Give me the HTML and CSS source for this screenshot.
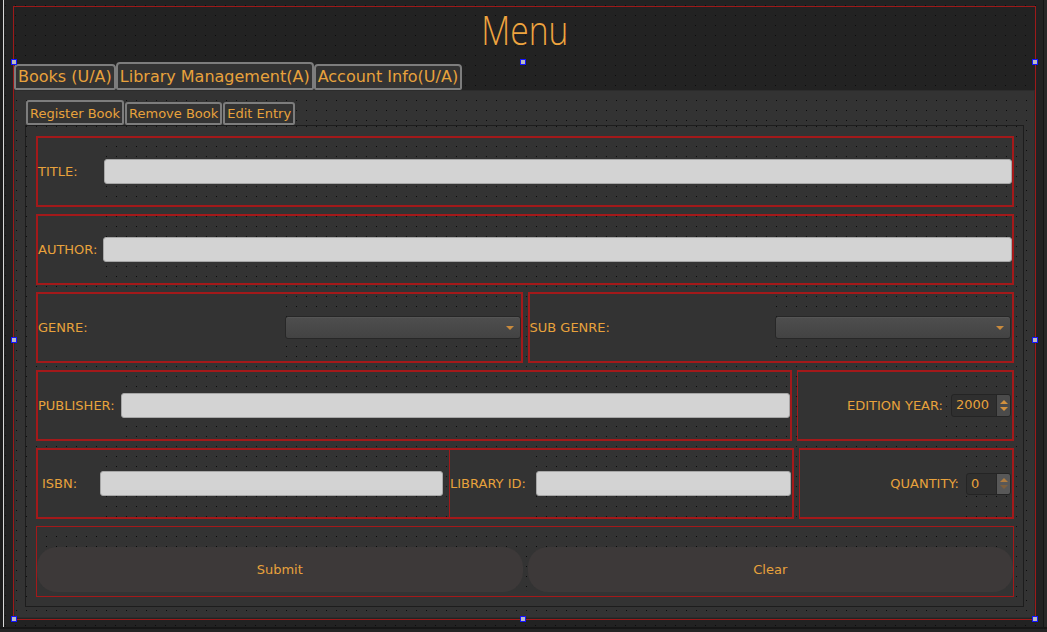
FILE: index.html
```html
<!DOCTYPE html>
<html>
<head>
<meta charset="utf-8">
<title>Menu</title>
<link rel="stylesheet" href="styles.css">
</head>
<body>
<div class="screen">
  <div class="main">
    <div class="gutter"></div>
    <div class="wline"></div>
    <div class="canvas">
      <div class="form">
        <div class="title-area"><span class="title">Menu</span></div>
        <div class="tabwidget">
          <div class="tabbar">
            <div class="tab">Books (U/A)</div>
            <div class="tab active">Library Management(A)</div>
            <div class="tab">Account Info(U/A)</div>
          </div>
          <div class="pane">
            <div class="subtabbar">
              <div class="stab active">Register Book</div>
              <div class="stab">Remove Book</div>
              <div class="stab">Edit Entry</div>
            </div>
            <div class="subpane">
              <div class="row">
                <div class="box grow">
                  <div class="lbl w-title">TITLE:</div>
                  <div class="field grow"></div>
                </div>
              </div>
              <div class="row">
                <div class="box grow">
                  <div class="lbl w-author">AUTHOR:</div>
                  <div class="field grow"></div>
                </div>
              </div>
              <div class="row">
                <div class="box grow">
                  <div class="lbl grow">GENRE:</div>
                  <div class="combo ml8"><span class="caret"></span></div>
                </div>
                <div class="box grow">
                  <div class="lbl grow">SUB GENRE:</div>
                  <div class="combo mr1"><span class="caret"></span></div>
                </div>
              </div>
              <div class="row">
                <div class="box pub">
                  <div class="lbl w-pub">PUBLISHER:</div>
                  <div class="field grow"></div>
                </div>
                <div class="box grow thinleft">
                  <div class="lbl grow right">EDITION YEAR:</div>
                  <div class="spin w-year ml8 mr1">
                    <div class="val">2000</div>
                    <div class="btns"><span class="up"></span><span class="dn"></span></div>
                  </div>
                </div>
              </div>
              <div class="row">
                <div class="box isbn">
                  <div class="sub sub-isbn">
                    <div class="lbl w-isbn pl4">ISBN:</div>
                    <div class="field grow"></div>
                  </div>
                  <div class="divider"></div>
                  <div class="sub grow">
                    <div class="lbl w-libid">LIBRARY ID:</div>
                    <div class="field grow mr1"></div>
                  </div>
                </div>
                <div class="box grow thinleft">
                  <div class="lbl grow right">QUANTITY:</div>
                  <div class="spin w-qty small ml7 mr1">
                    <div class="val">0</div>
                    <div class="btns light"><span class="up"></span><span class="dn off"></span></div>
                  </div>
                </div>
              </div>
              <div class="row">
                <div class="box grow buttons">
                  <div class="btn">Submit</div>
                  <div class="btn">Clear</div>
                </div>
              </div>
            </div>
          </div>
        </div>
        <div class="spacer"></div>
      </div>
    </div>
    <div class="rline"></div>
    <div class="rstrip"></div>
  </div>
  <div class="bline"></div>
  <div class="bstrip"></div>

  <span class="handle h-tl"></span>
  <span class="handle h-tc"></span>
  <span class="handle h-tr"></span>
  <span class="handle h-ml"></span>
  <span class="handle h-mr"></span>
  <span class="handle h-bl"></span>
  <span class="handle h-bc"></span>
  <span class="handle h-br"></span>
</div>
</body>
</html>
```

FILE: styles.css
```css
* { box-sizing: border-box; }
html, body { margin: 0; padding: 0; }
body {
  width: 1047px;
  height: 632px;
  overflow: hidden;
  background: #232323;
  font-family: "DejaVu Sans", "Liberation Sans", sans-serif;
  color: #e8a23c;
}
.screen {
  position: relative;
  width: 1047px;
  height: 632px;
  display: flex;
  flex-direction: column;
  background: #242424;
}
.main { display: flex; height: 627px; }
.gutter { width: 3px; background: #1c1c1c; }
.wline { width: 1px; background: #d8d8d8; }
.canvas {
  width: 1039px;
  background-color: #0d0d0d;
  background-image:
    linear-gradient(90deg, transparent 1px, #222222 1px),
    linear-gradient(180deg, transparent 1px, #222222 1px);
  background-size: 10px 10px;
  background-position: 1px 5px;
  padding: 6px 0 0 9px;
}
.rline { width: 1px; background: #151515; }
.rstrip { flex: 1; background: #282828; }
.bline { height: 2px; background: #161616; }
.bstrip { flex: 1; background: #242424; }

.form {
  width: 1023px;
  height: 614px;
  border: 1px solid #9c1a1a;
  display: flex;
  flex-direction: column;
}
.title-area {
  height: 55px;
  display: flex;
  justify-content: center;
  padding-top: 3px;
}
.title {
  display: inline-block;
  font-family: "Open Sans", "DejaVu Sans", sans-serif;
  font-weight: 300;
  font-size: 40px;
  line-height: 40px;
  color: #eea43f;
  transform: scaleX(0.84);
}
.tabwidget { height: 556px; display: flex; flex-direction: column; }
.spacer { height: 1px; }

.tabbar { height: 28px; display: flex; align-items: flex-end; }
.tab {
  height: 26px;
  border: 2px solid #7d7d7d;
  border-radius: 4px 4px 2px 2px;
  background: #333333;
  font-size: 16px;
  line-height: 22px;
  padding: 0 2px;
  white-space: nowrap;
}
.tab.active { height: 28px; padding-top: 2px; }

.pane {
  flex: 1;
  border: 1px solid #2c2c2c;
  background-color: #0d0d0d;
  background-image:
    linear-gradient(90deg, transparent 1px, #333333 1px),
    linear-gradient(180deg, transparent 1px, #333333 1px);
  background-size: 10px 10px;
  background-position: 1px 9px;
  padding: 9px 10px 10px 10px;
  display: flex;
  flex-direction: column;
}
.subtabbar {
  height: 25px;
  display: flex;
  align-items: flex-end;
  padding-left: 1px;
  gap: 1px;
}
.stab {
  height: 23px;
  border: 2px solid #7d7d7d;
  border-radius: 3px 3px 2px 2px;
  background: #333333;
  font-size: 13px;
  line-height: 19px;
  padding: 0 2px;
  white-space: nowrap;
}
.stab.active { height: 25px; padding-top: 2px; }

.subpane {
  flex: 1;
  border: 1px solid #1d1d1d;
  background-color: #0d0d0d;
  background-image:
    linear-gradient(90deg, transparent 1px, #333333 1px),
    linear-gradient(180deg, transparent 1px, #333333 1px);
  background-size: 10px 10px;
  background-position: 0 0;
  padding: 10px 9px 9px 10px;
  display: flex;
  flex-direction: column;
  gap: 7px;
}

.row { height: 71px; display: flex; gap: 5px; }
.box {
  border: 2px solid #a3191a;
  display: flex;
  align-items: center;
  min-width: 0;
}
.box.thinleft { border-left-width: 1px; }
.grow { flex: 1; min-width: 0; }
.pub { width: 756px; flex: none; }
.isbn { width: 758px; flex: none; align-items: stretch; }

.lbl {
  align-self: stretch;
  display: flex;
  align-items: center;
  background: #333333;
  font-size: 13px;
  white-space: nowrap;
  flex: none;
}
.lbl.grow { flex: 1; }
.lbl.right { justify-content: flex-end; }
.pl4 { padding-left: 4px; }
.w-title { width: 66px; }
.w-author { width: 65px; }
.w-pub { width: 83px; }
.w-isbn { width: 62px; }
.w-libid { width: 86px; }

.ml7 { margin-left: 7px; }
.ml8 { margin-left: 8px; }
.mr1 { margin-right: 1px; }

.field {
  height: 25px;
  background: #d3d3d3;
  border: 1px solid #a6a6a6;
  border-radius: 3px;
}

.sub { display: flex; align-items: center; }
.sub-isbn { width: 411px; flex: none; }
.sub-isbn .field { margin-right: 6px; }
.divider { width: 1px; background: #a3191a; flex: none; }

.combo {
  width: 236px;
  height: 23px;
  flex: none;
  border: 1px solid #272727;
  border-radius: 3px;
  background: linear-gradient(#4e4e4e, #434343);
  box-shadow: inset 0 1px 0 #555555;
  display: flex;
  align-items: center;
  justify-content: flex-end;
  padding-right: 6px;
}
.caret {
  width: 0;
  height: 0;
  border-left: 4px solid transparent;
  border-right: 4px solid transparent;
  border-top: 4px solid #c98a3c;
}

.spin {
  height: 23px;
  flex: none;
  border: 1px solid #242424;
  border-radius: 3px;
  background: #2f2f2f;
  display: flex;
  overflow: hidden;
}
.spin.small { height: 22px; }
.w-year { width: 60px; }
.w-qty { width: 45px; }
.spin .val {
  flex: 1;
  padding-left: 4px;
  font-size: 13px;
  line-height: 20px;
}
.spin .btns {
  width: 14px;
  background: #4b4b4b;
  border-left: 1px solid #262626;
  display: flex;
  flex-direction: column;
  align-items: center;
  justify-content: center;
  gap: 3px;
}
.spin .btns.light { background: #585858; }
.up {
  width: 0;
  height: 0;
  border-left: 4px solid transparent;
  border-right: 4px solid transparent;
  border-bottom: 4px solid #d2913e;
}
.dn {
  width: 0;
  height: 0;
  border-left: 4px solid transparent;
  border-right: 4px solid transparent;
  border-top: 4px solid #d2913e;
}
.btns.light .up { border-bottom-color: #b07c3e; }
.dn.off { border-top-color: #7c5f3e; }

.buttons {
  border-width: 1px;
  align-items: flex-end;
  padding-bottom: 4px;
  gap: 5px;
}
.btn {
  flex: 1;
  height: 45px;
  border-radius: 20px;
  background: #3d3939;
  display: flex;
  align-items: center;
  justify-content: center;
  font-size: 13px;
}

.handle {
  position: absolute;
  width: 6px;
  height: 6px;
  border: 1px solid #1414ff;
  background: #b9b9c2;
}
.h-tl { left: 11px; top: 59px; }
.h-tc { left: 520px; top: 59px; }
.h-tr { left: 1032px; top: 59px; }
.h-ml { left: 11px; top: 337px; }
.h-mr { left: 1032px; top: 337px; }
.h-bl { left: 11px; top: 616px; }
.h-bc { left: 520px; top: 616px; }
.h-br { left: 1032px; top: 616px; }
```
